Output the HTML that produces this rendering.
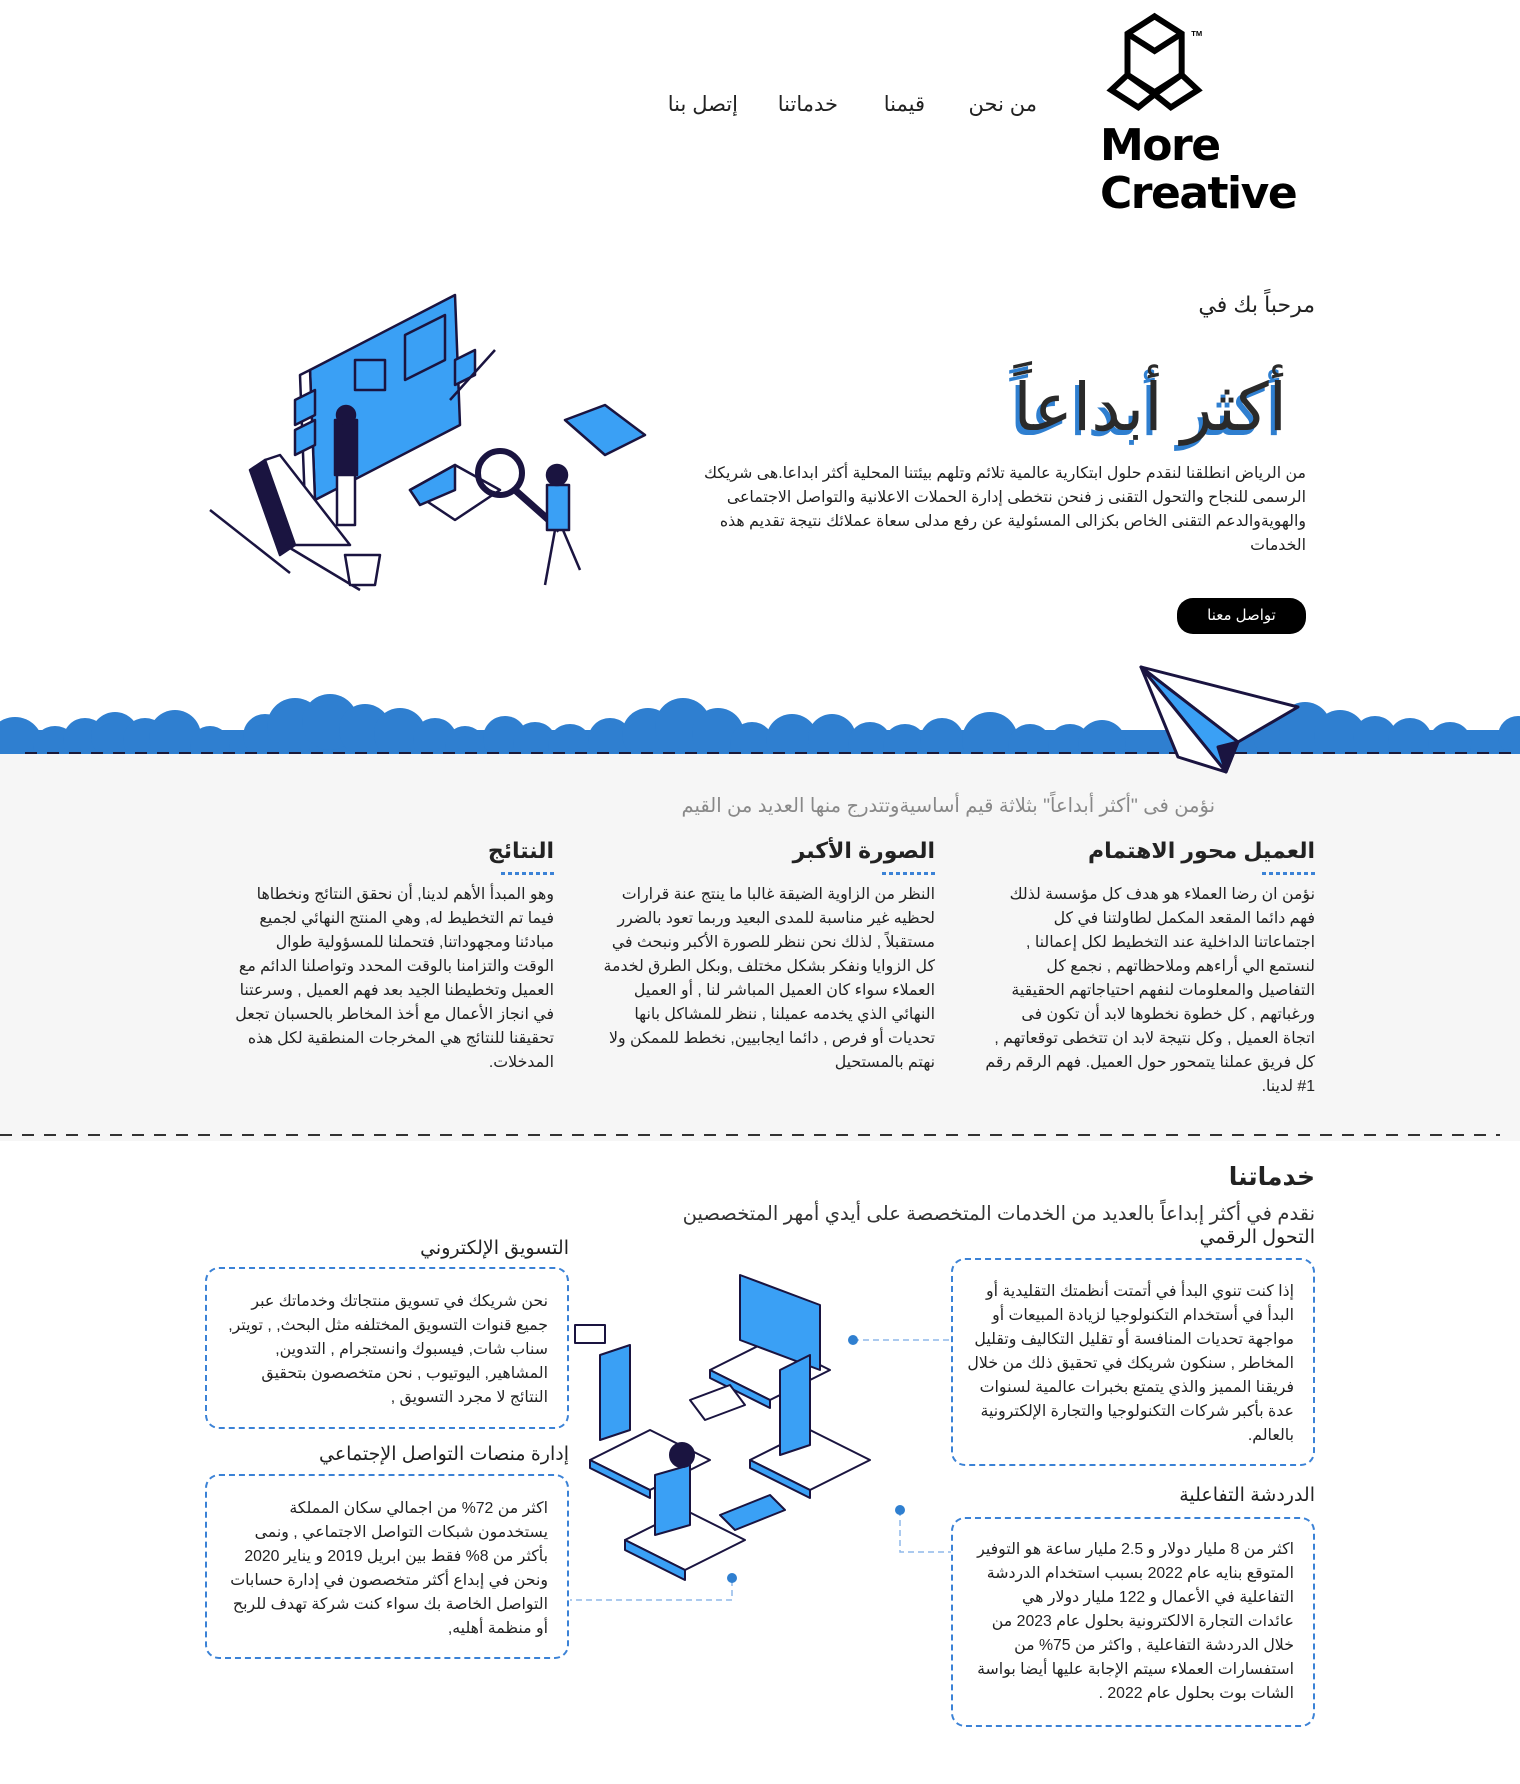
<!DOCTYPE html>
<html lang="ar" dir="rtl">
<head>
<meta charset="utf-8">
<style>
*{margin:0;padding:0;box-sizing:border-box}
html,body{width:1520px;height:1784px;background:#fff;overflow:hidden}
body{position:relative;font-family:"Liberation Sans","DejaVu Sans",sans-serif;color:#222}
.a{position:absolute}
.nav{top:92px;font-size:21px;color:#222;white-space:nowrap}
.p{font-size:15.8px;line-height:24px;white-space:nowrap;text-align:right;color:#222}
.h{font-size:22px;font-weight:bold;white-space:nowrap;text-align:right;color:#222}
.dots{position:absolute;height:3px;width:56px;background:repeating-linear-gradient(to left,#3b82d6 0 4px,transparent 4px 7px)}
.box{position:absolute;border:2px dashed #3b82d6;border-radius:14px}
</style>
</head>
<body>

<!-- Logo -->
<svg class="a" style="left:1100px;top:12px" width="120" height="104" viewBox="0 0 110 96">
 <g fill="none" stroke="#000" stroke-width="5.5" stroke-linejoin="miter">
  <polygon points="50,4 75,20 75,58 50,74 25,58 25,20"/>
  <polyline points="25,20 50,36 75,20"/>
  <polygon points="25,58 50,76 35,88 10,72"/>
  <polygon points="75,58 50,76 65,88 90,72"/>
 </g>
 <text x="94" y="22" font-size="7" font-family="Liberation Sans" font-weight="bold">TM</text>
</svg>
<div class="a" style="left:1100px;top:122px;font-family:'DejaVu Sans','Liberation Sans',sans-serif;font-weight:bold;font-size:44px;line-height:48px;letter-spacing:-1.5px;direction:ltr;color:#000">More<br>Creative</div>

<!-- Nav -->
<div class="a nav" style="right:483px">من نحن</div>
<div class="a nav" style="right:595px">قيمنا</div>
<div class="a nav" style="right:682px">خدماتنا</div>
<div class="a nav" style="right:782px">إتصل بنا</div>

<!-- Hero -->
<div class="a" style="right:205px;top:292px;font-size:22px;white-space:nowrap">مرحباً بك في</div>
<div class="a" style="right:233px;top:362px;font-size:66px;font-weight:normal;white-space:nowrap;color:#2a2a2a;text-shadow:-4px 5px 0 #2f7fd0;line-height:90px">أكثر أبداعاً</div>
<div class="a p" style="right:214px;top:462px">من الرياض انطلقنا لنقدم حلول ابتكارية عالمية تلائم وتلهم بيئتنا المحلية أكثر ابداعا.هى شريكك<br>الرسمى للنجاح والتحول التقنى ز فنحن نتخطى إدارة الحملات الاعلانية والتواصل الاجتماعى<br>والهويةوالدعم التقنى الخاص بكزالى المسئولية عن رفع مدلى سعاة عملائك نتيجة تقديم هذه<br>الخدمات</div>
<div class="a" style="left:1177px;top:598px;width:129px;height:36px;background:#000;border-radius:16px;color:#fff;font-size:15px;text-align:center;line-height:36px">تواصل معنا</div>

<!-- Hero illustration -->
<svg class="a" style="left:205px;top:290px" width="450" height="305" viewBox="0 0 450 305">
 <g stroke="#1a1440" stroke-width="2.5" stroke-linejoin="round">
  <polygon points="105,80 250,5 255,135 110,210" fill="#3aa0f5"/>
  <polygon points="105,80 110,210 100,215 95,85" fill="#fff"/>
  <rect x="150" y="70" width="30" height="30" fill="#3aa0f5"/>
  <polygon points="200,45 240,25 240,70 200,90" fill="#3aa0f5"/>
  <polygon points="90,110 110,100 110,125 90,135" fill="#3aa0f5"/>
  <polygon points="90,140 110,130 110,155 90,165" fill="#3aa0f5"/>
  <polygon points="250,70 270,60 270,85 250,95" fill="#3aa0f5"/>
  <polygon points="45,180 60,170 90,255 75,265" fill="#1a1440"/>
  <polygon points="60,170 75,165 145,255 90,255" fill="#fff"/>
  <line x1="5" y1="220" x2="85" y2="283"/>
  <line x1="80" y1="255" x2="155" y2="300"/>
  <rect x="130" y="130" width="22" height="55" fill="#1a1440"/>
  <rect x="132" y="185" width="18" height="50" fill="#fff"/>
  <circle cx="141" cy="125" r="9" fill="#1a1440"/>
  <polygon points="205,200 250,175 295,200 250,230" fill="#fff"/>
  <polygon points="205,200 250,175 250,200 215,215" fill="#3aa0f5"/>
  <circle cx="295" cy="183" r="22" fill="none" stroke-width="6"/>
  <line x1="310" y1="200" x2="355" y2="240" stroke-width="7"/>
  <rect x="342" y="195" width="22" height="45" fill="#3aa0f5"/>
  <circle cx="352" cy="185" r="10" fill="#1a1440"/>
  <line x1="350" y1="240" x2="340" y2="295"/><line x1="358" y1="240" x2="375" y2="280"/>
  <polygon points="360,130 400,115 440,145 400,165" fill="#3aa0f5"/>
  <line x1="245" y1="110" x2="290" y2="60"/>
  <path d="M140 265 l35 0 l-5 30 l-25 0z" fill="#fff"/>
 </g>
</svg>

<!-- Clouds -->
<svg class="a" style="left:0;top:660px" width="1520" height="100" viewBox="0 0 1520 100">
 <g fill="#2f7fd0">
  <rect x="0" y="70" width="1520" height="24"/>
  <circle cx="15" cy="85" r="28"/><circle cx="55" cy="88" r="22"/><circle cx="85" cy="80" r="22"/><circle cx="115" cy="76" r="24"/><circle cx="145" cy="80" r="22"/><circle cx="175" cy="76" r="26"/><circle cx="210" cy="86" r="20"/>
  <circle cx="265" cy="76" r="22"/><circle cx="295" cy="66" r="28"/><circle cx="330" cy="62" r="28"/><circle cx="365" cy="70" r="26"/><circle cx="400" cy="74" r="26"/><circle cx="435" cy="80" r="22"/><circle cx="465" cy="86" r="20"/><circle cx="505" cy="78" r="22"/><circle cx="535" cy="84" r="22"/>
  <circle cx="570" cy="86" r="22"/><circle cx="610" cy="80" r="22"/><circle cx="648" cy="74" r="26"/><circle cx="683" cy="66" r="28"/><circle cx="718" cy="74" r="26"/><circle cx="752" cy="84" r="22"/>
  <circle cx="792" cy="80" r="26"/><circle cx="832" cy="78" r="24"/><circle cx="870" cy="84" r="22"/><circle cx="905" cy="86" r="22"/><circle cx="942" cy="80" r="22"/><circle cx="990" cy="80" r="28"/><circle cx="1030" cy="86" r="22"/><circle cx="1070" cy="86" r="22"/><circle cx="1102" cy="84" r="24"/>
  <circle cx="1200" cy="86" r="24"/><circle cx="1240" cy="80" r="24"/><circle cx="1275" cy="76" r="22"/><circle cx="1305" cy="68" r="26"/><circle cx="1340" cy="76" r="26"/><circle cx="1375" cy="78" r="22"/><circle cx="1410" cy="80" r="22"/><circle cx="1450" cy="84" r="22"/><circle cx="1490" cy="90" r="20"/><circle cx="1518" cy="76" r="20"/>
 </g>
</svg>
<!-- gray section -->
<div class="a" style="left:0;top:754px;width:1520px;height:387px;background:#f6f6f6"></div>
<div class="a" style="left:25px;top:752px;width:1495px;height:2px;background:repeating-linear-gradient(to right,#1a1a3a 0 12px,transparent 12px 22px)"></div>
<div class="a" style="left:0;top:1134px;width:1500px;height:2px;background:repeating-linear-gradient(to right,#333 0 12px,transparent 12px 22px)"></div>

<!-- plane -->
<svg class="a" style="left:1138px;top:662px" width="165" height="115" viewBox="0 0 165 115">
 <g stroke="#1a1440" stroke-width="3" stroke-linejoin="round">
  <polygon points="3,5 160,45 100,80" fill="#fff"/>
  <polygon points="3,5 100,80 88,110" fill="#3aa0f5"/>
  <polygon points="3,5 88,110 40,95" fill="#fff"/>
  <polygon points="88,110 100,80 80,85" fill="#1a1440"/>
 </g>
</svg>

<!-- Values -->
<div class="a" style="right:305px;top:794px;font-size:19.5px;color:#888;white-space:nowrap">نؤمن فى "أكثر أبداعاً" بثلاثة قيم أساسيةوتتدرج منها العديد من القيم</div>

<div class="a h" style="right:205px;top:838px">العميل محور الاهتمام</div>
<div class="dots" style="right:205px;top:872px"></div>
<div class="a h" style="right:585px;top:838px">الصورة الأكبر</div>
<div class="dots" style="right:585px;top:872px"></div>
<div class="a h" style="right:966px;top:838px">النتائج</div>
<div class="dots" style="right:966px;top:872px"></div>

<div class="a p" style="right:205px;top:883px">نؤمن ان رضا العملاء هو هدف كل مؤسسة لذلك<br>فهم دائما المقعد المكمل لطاولتنا في كل<br>اجتماعاتنا الداخلية عند التخطيط لكل إعمالنا ,<br>لنستمع الي أراءهم وملاحظاتهم , نجمع كل<br>التفاصيل والمعلومات لنفهم احتياجاتهم الحقيقية<br>ورغباتهم , كل خطوة نخطوها لابد أن تكون فى<br>اتجاة العميل , وكل نتيجة لابد ان تتخطى توقعاتهم ,<br>كل فريق عملنا يتمحور حول العميل. فهم الرقم رقم<br>#1 لدينا.</div>
<div class="a p" style="right:585px;top:883px">النظر من الزاوية الضيقة غالبا ما ينتج عنة قرارات<br>لحظيه غير مناسبة للمدى البعيد وربما تعود بالضرر<br>مستقبلاً , لذلك نحن ننظر للصورة الأكبر ونبحث في<br>كل الزوايا ونفكر بشكل مختلف ,وبكل الطرق لخدمة<br>العملاء سواء كان العميل المباشر لنا , أو العميل<br>النهائي الذي يخدمه عميلنا , ننظر للمشاكل بانها<br>تحديات أو فرص , دائما ايجابيين, نخطط للممكن ولا<br>نهتم بالمستحيل</div>
<div class="a p" style="right:966px;top:883px">وهو المبدأ الأهم لدينا, أن نحقق النتائج ونخطاها<br>فيما تم التخطيط له, وهي المنتج النهائي لجميع<br>مبادئنا ومجهوداتنا, فتحملنا للمسؤولية طوال<br>الوقت والتزامنا بالوقت المحدد وتواصلنا الدائم مع<br>العميل وتخطيطنا الجيد بعد فهم العميل , وسرعتنا<br>في انجاز الأعمال مع أخذ المخاطر بالحسبان تجعل<br>تحقيقنا للنتائج هي المخرجات المنطقية لكل هذه<br>المدخلات.</div>

<!-- Services -->
<div class="a h" style="right:205px;top:1162px;font-size:25px">خدماتنا</div>
<div class="a" style="right:205px;top:1202px;font-size:19.5px;color:#333;white-space:nowrap">نقدم في أكثر إبداعاً بالعديد من الخدمات المتخصصة على أيدي أمهر المتخصصين</div>
<div class="a" style="right:205px;top:1226px;font-size:19px;white-space:nowrap">التحول الرقمي</div>
<div class="box" style="left:951px;top:1258px;width:364px;height:208px"></div>
<div class="a p" style="right:226px;top:1280px">إذا كنت تنوي البدأ في أتمتت أنظمتك التقليدية أو<br>البدأ في أستخدام التكنولوجيا لزيادة المبيعات أو<br>مواجهة تحديات المنافسة أو تقليل التكاليف وتقليل<br>المخاطر , سنكون شريكك في تحقيق ذلك من خلال<br>فريقنا المميز والذي يتمتع بخبرات عالمية لسنوات<br>عدة بأكبر شركات التكنولوجيا والتجارة الإلكترونية<br>بالعالم.</div>

<div class="a" style="right:205px;top:1484px;font-size:19px;white-space:nowrap">الدردشة التفاعلية</div>
<div class="box" style="left:951px;top:1517px;width:364px;height:210px"></div>
<div class="a p" style="right:226px;top:1538px">اكثر من 8 مليار دولار و 2.5 مليار ساعة هو التوفير<br>المتوقع بنايه عام 2022 بسبب استخدام الدردشة<br>التفاعلية في الأعمال و 122 مليار دولار هي<br>عائدات التجارة الالكترونية بحلول عام 2023 من<br>خلال الدردشة التفاعلية , واكثر من 75% من<br>استفسارات العملاء سيتم الإجابة عليها أيضا بواسة<br>الشات بوت بحلول عام 2022 .</div>

<div class="a" style="right:951px;top:1237px;font-size:19px;white-space:nowrap">التسويق الإلكتروني</div>
<div class="box" style="left:205px;top:1267px;width:364px;height:162px"></div>
<div class="a p" style="right:972px;top:1290px">نحن شريكك في تسويق منتجاتك وخدماتك عبر<br>جميع قنوات التسويق المختلفه مثل البحث, , تويتر,<br>سناب شات, فيسبوك وانستجرام , التدوين,<br>المشاهير, اليوتيوب , نحن متخصصون بتحقيق<br>النتائج لا مجرد التسويق ,</div>

<div class="a" style="right:951px;top:1443px;font-size:19px;white-space:nowrap">إدارة منصات التواصل الإجتماعي</div>
<div class="box" style="left:205px;top:1474px;width:364px;height:185px"></div>
<div class="a p" style="right:972px;top:1497px">اكثر من 72% من اجمالي سكان المملكة<br>يستخدمون شبكات التواصل الاجتماعي , ونمى<br>بأكثر من 8% فقط بين ابريل 2019 و يناير 2020<br>ونحن في إبداع أكثر متخصصون في إدارة حسابات<br>التواصل الخاصة بك سواء كنت شركة تهدف للربح<br>أو منظمة أهليه,</div>

<!-- connectors + illustration -->
<svg class="a" style="left:570px;top:1260px" width="385" height="350" viewBox="0 0 385 350">
 <g stroke="#8fb8ea" stroke-width="1.5" stroke-dasharray="6 4" fill="none">
  <line x1="283" y1="80" x2="381" y2="80"/>
  <polyline points="330,250 330,292 381,292"/>
  <polyline points="162,320 162,340 0,340"/>
 </g>
 <g fill="#2f7fd0"><circle cx="283" cy="80" r="5"/><circle cx="330" cy="250" r="5"/><circle cx="162" cy="318" r="5"/></g>
 <g stroke="#1a1440" stroke-width="2" stroke-linejoin="round">
  <polygon points="140,110 200,80 260,110 200,140" fill="#fff"/>
  <polygon points="140,110 200,140 200,148 140,118" fill="#3aa0f5"/>
  <polygon points="170,15 250,45 250,110 170,80" fill="#3aa0f5"/>
  <polygon points="20,200 80,170 140,200 80,230" fill="#fff"/>
  <polygon points="20,200 80,230 80,238 20,208" fill="#3aa0f5"/>
  <polygon points="30,95 60,85 60,170 30,180" fill="#3aa0f5"/>
  <polygon points="180,200 240,170 300,200 240,230" fill="#fff"/>
  <polygon points="180,200 240,230 240,238 180,208" fill="#3aa0f5"/>
  <polygon points="210,110 240,95 240,185 210,195" fill="#3aa0f5"/>
  <polygon points="55,280 115,250 175,280 115,310" fill="#fff"/>
  <polygon points="55,280 115,310 115,320 55,290" fill="#3aa0f5"/>
  <polygon points="85,215 120,205 120,265 85,275" fill="#3aa0f5"/>
  <circle cx="112" cy="195" r="12" fill="#1a1440"/>
  <path d="M5 65 h30 v18 h-30z" fill="#fff"/>
  <polygon points="120,140 160,125 175,145 135,160" fill="#fff"/>
  <polygon points="150,255 200,235 215,250 165,270" fill="#3aa0f5"/>
 </g>
</svg>

</body>
</html>
